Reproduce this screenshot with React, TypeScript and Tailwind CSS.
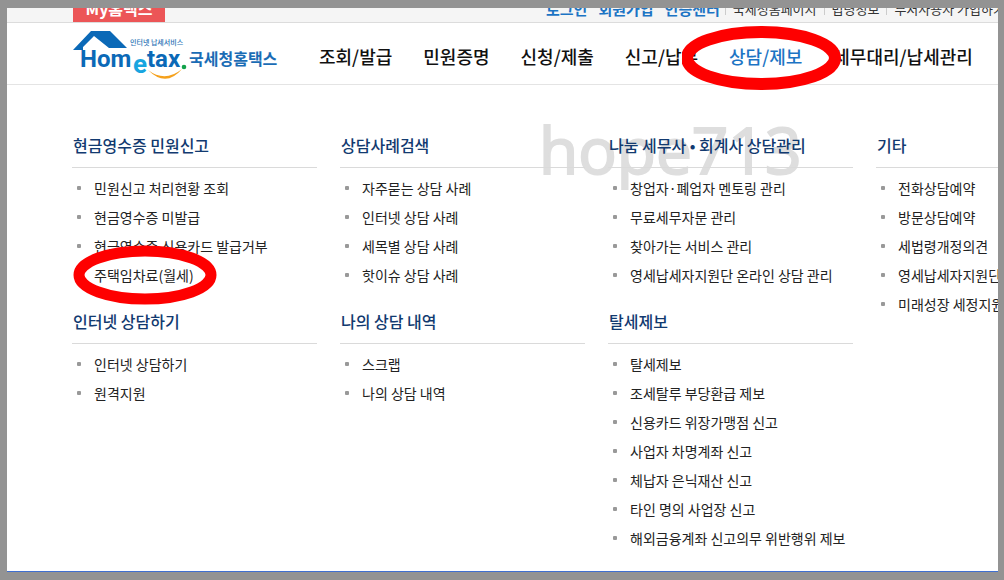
import React from 'react';

interface MenuItem {
  label: string;
  marked?: boolean;
}

interface MenuSection {
  title: string;
  items: MenuItem[];
}

const accountLinks = ['로그인', '회원가입', '인증센터'];
const siteLinks = ['국세청홈페이지', '법령정보', '부서사용자 가입하기'];

const navItems = [
  { label: '조회/발급' },
  { label: '민원증명' },
  { label: '신청/제출' },
  { label: '신고/납부' },
  { label: '상담/제보', active: true },
  { label: '세무대리/납세관리' },
];

const columns: MenuSection[][] = [
  [
    {
      title: '현금영수증 민원신고',
      items: [
        { label: '민원신고 처리현황 조회' },
        { label: '현금영수증 미발급' },
        { label: '현금영수증 신용카드 발급거부' },
        { label: '주택임차료(월세)', marked: true },
      ],
    },
    {
      title: '인터넷 상담하기',
      items: [{ label: '인터넷 상담하기' }, { label: '원격지원' }],
    },
  ],
  [
    {
      title: '상담사례검색',
      items: [
        { label: '자주묻는 상담 사례' },
        { label: '인터넷 상담 사례' },
        { label: '세목별 상담 사례' },
        { label: '핫이슈 상담 사례' },
      ],
    },
    {
      title: '나의 상담 내역',
      items: [{ label: '스크랩' }, { label: '나의 상담 내역' }],
    },
  ],
  [
    {
      title: '나눔 세무사 • 회계사 상담관리',
      items: [
        { label: '창업자·폐업자 멘토링 관리' },
        { label: '무료세무자문 관리' },
        { label: '찾아가는 서비스 관리' },
        { label: '영세납세자지원단 온라인 상담 관리' },
      ],
    },
    {
      title: '탈세제보',
      items: [
        { label: '탈세제보' },
        { label: '조세탈루 부당환급 제보' },
        { label: '신용카드 위장가맹점 신고' },
        { label: '사업자 차명계좌 신고' },
        { label: '체납자 은닉재산 신고' },
        { label: '타인 명의 사업장 신고' },
        { label: '해외금융계좌 신고의무 위반행위 제보' },
      ],
    },
  ],
  [
    {
      title: '기타',
      items: [
        { label: '전화상담예약' },
        { label: '방문상담예약' },
        { label: '세법령개정의견' },
        { label: '영세납세자지원단' },
        { label: '미래성장 세정지원' },
      ],
    },
  ],
];

const Logo: React.FC = () => (
  <svg width="206" height="52" viewBox="0 0 206 52" role="img" aria-label="Hometax 국세청홈택스">
    <path d="M1 20 L19 1 H38 L55 18 H37 L22 6 L11 17 V20 Z" fill="#0b69b7" />
    <text x="58" y="15" fontSize="7" fontWeight="500" fill="#2a72b5">인터넷 납세서비스</text>
    <g fontFamily="Roboto, sans-serif" fontWeight="700">
      <text x="8" y="37" fontSize="24" fill="#0b69b7">Hom</text>
      <text x="61" y="43" fontSize="26" fill="#18a5e0">e</text>
      <text x="75" y="37" fontSize="24" fill="#0b69b7">tax</text>
    </g>
    <circle cx="112" cy="37" r="2.3" fill="#12a24a" />
    <path d="M76 40 Q93 53 110 39 Q94 58 76 40 Z" fill="#f5a11c" />
    <text x="117" y="35" fontSize="16" fontWeight="700" fill="#1a6cb5">국세청홈택스</text>
  </svg>
);

const TopBar: React.FC = () => (
  <div className="flex h-[15px] items-end overflow-hidden border-b border-[#dcdcdc] bg-[#f5f5f5] pl-[66px] whitespace-nowrap">
    <a href="#my" className="flex h-[28px] w-[92px] shrink-0 items-center justify-center bg-[#ec5557] text-base font-bold text-white">
      My홈택스
    </a>
    <div className="ml-[381px] flex h-[26px] shrink-0 items-center gap-[11px] text-[15px] font-bold text-[#1c74c4]">
      {accountLinks.map((label) => (
        <a key={label} href="#account">{label}</a>
      ))}
    </div>
    <div className="ml-[5px] flex h-[26px] shrink-0 items-center text-[13px] text-[#333]">
      {siteLinks.map((label) => (
        <React.Fragment key={label}>
          <span className="h-3 w-px bg-[#ccc]" />
          <a href="#site" className="px-[7px]">{label}</a>
        </React.Fragment>
      ))}
    </div>
  </div>
);

const Header: React.FC = () => (
  <header className="flex h-[62px] items-center border-b border-[#e4e4e4] pt-1 pl-[65px] whitespace-nowrap">
    <a href="#home" className="shrink-0">
      <Logo />
    </a>
    <nav className="ml-[41px] flex shrink-0 gap-[31px] text-lg font-medium text-[#111]">
      {navItems.map((item) => (
        <a
          key={item.label}
          href="#menu"
          className={item.active ? 'relative z-10 text-[#1c74c4]' : undefined}
        >
          {item.label}
          {item.active && (
            <svg className="absolute top-1/2 left-1/2 max-w-none -translate-x-1/2 -translate-y-1/2" width="168" height="68" viewBox="0 0 168 68" aria-hidden="true">
              <ellipse cx="79" cy="36" rx="74" ry="26" fill="none" stroke="#fe0000" strokeWidth="12" />
            </svg>
          )}
        </a>
      ))}
    </nav>
  </header>
);

const Section: React.FC<{ section: MenuSection }> = ({ section }) => (
  <section>
    <h2 className="border-b border-[#dadada] pb-[10px] pl-px text-base font-medium text-[#123a70]">
      {section.title}
    </h2>
    <ul className="pt-[5px]">
      {section.items.map((item) => (
        <li key={item.label} className="flex h-[29px] items-center pl-[5px]">
          <span className="size-1 shrink-0 rounded-[1px] bg-[#999]" />
          <a href="#item" className="relative ml-[13px] text-sm text-[#222]">
            {item.label}
            {item.marked && (
              <svg className="absolute top-1/2 left-1/2 max-w-none -translate-x-1/2 -translate-y-1/2" width="146" height="60" viewBox="0 0 146 60" aria-hidden="true">
                <ellipse cx="74" cy="30" rx="66" ry="24" fill="none" stroke="#fe0000" strokeWidth="11" />
              </svg>
            )}
          </a>
        </li>
      ))}
    </ul>
  </section>
);

const App: React.FC = () => {
  return (
    <div className="min-h-screen overflow-hidden bg-[#939393] pt-2 pr-[6px] pb-[7px] pl-[7px] font-['Noto_Sans_CJK_KR',sans-serif]">
      <div className="overflow-hidden border-b border-[#3f6fd0] bg-white">
        <TopBar />
        <Header />
        <main className="relative pt-[48px] pb-[19px] pl-[65px]">
          <span className="absolute top-[17px] left-[532px] font-['Open_Sans',sans-serif] text-[64px] text-[#dedede] [-webkit-text-stroke:2px_#dedede]" aria-hidden="true">
            hope713
          </span>
          <div className="relative flex gap-[23px] whitespace-nowrap">
            {columns.map((sections) => (
              <div key={sections[0].title} className="flex w-[245px] shrink-0 flex-col gap-5">
                {sections.map((section) => (
                  <Section key={section.title} section={section} />
                ))}
              </div>
            ))}
          </div>
        </main>
      </div>
    </div>
  );
};

export default App;
